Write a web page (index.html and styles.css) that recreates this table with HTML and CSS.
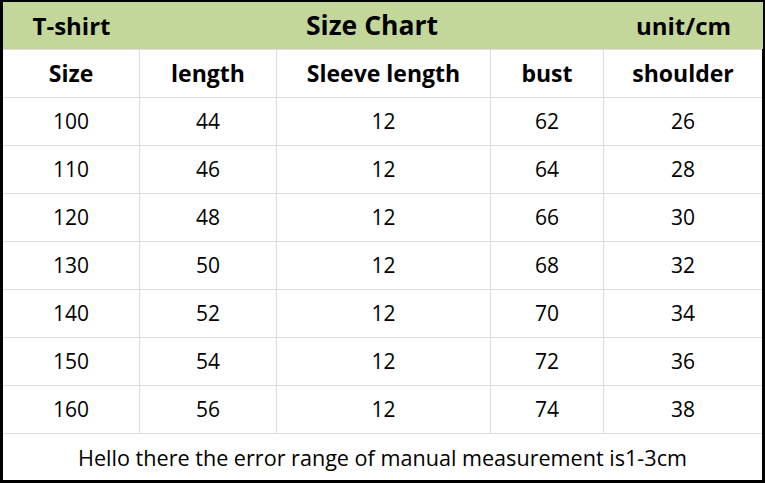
FILE: index.html
```html
<!DOCTYPE html>
<html>
<head>
<meta charset="utf-8">
<link rel="stylesheet" href="styles.css">
</head>
<body>
<div class="chart">
  <div class="cell head">T-shirt</div>
  <div class="cell head span3">Size Chart</div>
  <div class="cell head">unit/cm</div>

  <div class="cell colh">Size</div>
  <div class="cell colh">length</div>
  <div class="cell colh">Sleeve length</div>
  <div class="cell colh">bust</div>
  <div class="cell colh">shoulder</div>

  <div class="cell">100</div><div class="cell">44</div><div class="cell">12</div><div class="cell">62</div><div class="cell">26</div>
  <div class="cell">110</div><div class="cell">46</div><div class="cell">12</div><div class="cell">64</div><div class="cell">28</div>
  <div class="cell">120</div><div class="cell">48</div><div class="cell">12</div><div class="cell">66</div><div class="cell">30</div>
  <div class="cell">130</div><div class="cell">50</div><div class="cell">12</div><div class="cell">68</div><div class="cell">32</div>
  <div class="cell">140</div><div class="cell">52</div><div class="cell">12</div><div class="cell">70</div><div class="cell">34</div>
  <div class="cell">150</div><div class="cell">54</div><div class="cell">12</div><div class="cell">72</div><div class="cell">36</div>
  <div class="cell">160</div><div class="cell">56</div><div class="cell">12</div><div class="cell">74</div><div class="cell">38</div>

  <div class="cell foot">Hello there the error range of manual measurement is1-3cm</div>
</div>
</body>
</html>
```
FILE: styles.css
```css
html, body {
  margin: 0;
  padding: 0;
  background: #ffffff;
}
.chart {
  box-sizing: border-box;
  width: 765px;
  height: 483px;
  border: 3px solid #000;
  border-top-width: 2px;
  background: #dcdcdc;
  display: grid;
  grid-template-columns: 136px 136px 213px 112px 1fr;
  grid-template-rows: 47px 47px repeat(7, 47px) 1fr;
  column-gap: 1px;
  row-gap: 1px;
  font-family: "Open Sans", "Noto Sans", sans-serif;
  color: #000;
}
.cell {
  background: #fff;
  display: flex;
  align-items: center;
  justify-content: center;
  font-size: 21px;
  line-height: 1;
}
.head {
  background: #c4d79b;
  font-weight: 700;
  font-size: 24px;
  margin-right: -1px;
}
.span3 {
  grid-column: span 3;
  font-size: 26.5px;
}
.colh {
  font-weight: 700;
  font-size: 23px;
}
.foot {
  grid-column: 1 / -1;
  font-size: 21.6px;
  padding-top: 2px;
}
```
